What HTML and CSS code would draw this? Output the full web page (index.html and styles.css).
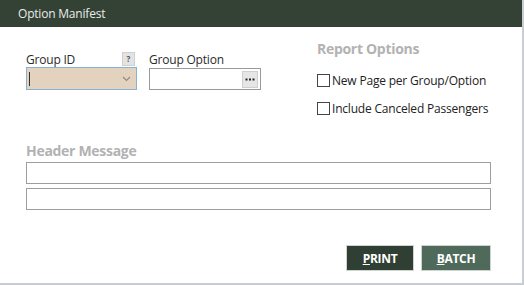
FILE: index.html
```html
<!DOCTYPE html>
<html lang="en">
<head>
    <meta charset="UTF-8">
    <title>Option Manifest</title>
    <link rel="stylesheet" href="styles.css">
</head>
<body>
    <div class="window">
        <div class="titlebar">Option Manifest</div>
        <div class="content">
            <div class="top-row">
                <div class="field group-id">
                    <div class="label-row">
                        <label>Group ID</label>
                        <span class="help">?</span>
                    </div>
                    <div class="select">
                        <span class="caret-text"></span>
                        <svg class="chevron" width="9" height="6" viewBox="0 0 9 6"><path d="M1 1 L4.5 4.5 L8 1" fill="none" stroke="#8a8a8a" stroke-width="1.1"/></svg>
                    </div>
                </div>
                <div class="field group-option">
                    <div class="label-row">
                        <label>Group Option</label>
                    </div>
                    <div class="input-btn">
                        <span class="dots">
                            <svg width="10" height="3" viewBox="0 0 10 3"><rect x="0.5" y="0.5" width="2" height="2" fill="#222"/><rect x="4" y="0.5" width="2" height="2" fill="#222"/><rect x="7.5" y="0.5" width="2" height="2" fill="#222"/></svg>
                        </span>
                    </div>
                </div>
                <div class="report-options">
                    <h3>Report Options</h3>
                    <label class="check"><span class="box"></span>New Page per Group/Option</label>
                    <label class="check"><span class="box"></span>Include Canceled Passengers</label>
                </div>
            </div>

            <div class="header-message">
                <h3>Header Message</h3>
                <div class="text-input"></div>
                <div class="text-input"></div>
            </div>

            <div class="actions">
                <button class="btn btn-dark"><u>P</u>RINT</button>
                <button class="btn btn-light"><u>B</u>ATCH</button>
            </div>
        </div>
    </div>
</body>
</html>
```

FILE: styles.css
```css
body {
    margin: 0;
    font-family: "Open Sans", "Noto Sans", sans-serif;
    background: #ffffff;
}
.window {
    width: 522px;
    height: 283px;
    border-right: 2px solid #c9ccd0;
    border-bottom: 2px solid #c9ccd0;
    background: #ffffff;
}
.titlebar {
    height: 27px;
    background: #344236;
    color: #e8ece8;
    font-size: 12px;
    line-height: 27px;
    padding-left: 18px;
    letter-spacing: -0.2px;
}
.content {
    padding: 14px 0 0 26px;
}
.top-row {
    display: flex;
    height: 90px;
}
.field {
    display: flex;
    flex-direction: column;
}
.group-id {
    width: 111px;
    margin-top: 10px;
}
.group-option {
    width: 112px;
    margin-left: 12px;
    margin-top: 10px;
}
.label-row {
    display: flex;
    justify-content: space-between;
    align-items: center;
    height: 16px;
}
.label-row label {
    font-size: 12px;
    color: #2a2a2a;
    letter-spacing: -0.2px;
}
.help {
    width: 11px;
    height: 12px;
    background: #e3e3e3;
    border: 1px solid #cfcfcf;
    font-size: 8px;
    line-height: 12px;
    text-align: center;
    color: #555;
    font-weight: bold;
    margin-right: 2px;
}
.select {
    height: 21px;
    background: #e3d2bd;
    border: 1px solid #86b2d8;
    display: flex;
    align-items: center;
    justify-content: space-between;
    padding: 0 5px 0 2px;
}
.caret-text {
    width: 1px;
    height: 14px;
    background: #333;
}
.input-btn {
    margin-top: 1px;
    height: 20px;
    border: 1px solid #9a9a9a;
    background: #fff;
    display: flex;
    justify-content: flex-end;
    align-items: center;
    padding-right: 2px;
}
.dots {
    width: 14px;
    height: 15px;
    background: #e6e6e6;
    border: 1px solid #cfcfcf;
    display: flex;
    align-items: center;
    justify-content: center;
}
.report-options {
    margin-left: 56px;
}
h3 {
    margin: 0;
    font-size: 14px;
    font-weight: bold;
    color: #b2b2b2;
    letter-spacing: -0.3px;
}
.report-options h3 {
    margin-top: -2px;
    margin-bottom: 14px;
}
.check {
    display: flex;
    align-items: center;
    font-size: 12px;
    color: #222;
    height: 16px;
    margin-bottom: 12px;
    letter-spacing: -0.2px;
}
.box {
    width: 11px;
    height: 11px;
    border: 1px solid #444;
    margin-right: 2px;
    background: #fff;
}
.header-message {
    width: 465px;
    margin-top: 10px;
}
.header-message h3 {
    margin-bottom: 2px;
}
.text-input {
    height: 20px;
    border: 1px solid #9e9e9e;
    background: #fff;
    margin-bottom: 4px;
}
.actions {
    display: flex;
    justify-content: flex-end;
    gap: 7px;
    width: 465px;
    margin-top: 35px;
}
.btn {
    height: 26px;
    border: 1px solid #d0d4d0;
    color: #ffffff;
    font-family: "Open Sans", "Noto Sans", sans-serif;
    font-size: 12px;
    font-weight: bold;
    padding: 0;
    letter-spacing: -0.3px;
}
.btn-dark {
    width: 68px;
    background: #2f3f33;
}
.btn-light {
    width: 70px;
    background: #4f6a5a;
}
```
